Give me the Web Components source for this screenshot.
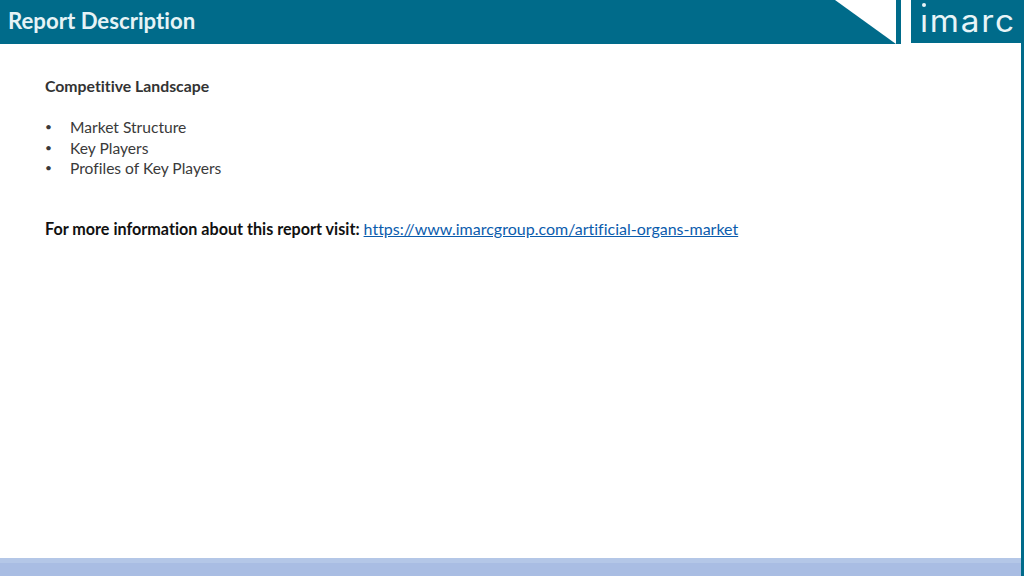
<!DOCTYPE html>
<html lang="en">
<head>
<meta charset="utf-8">
<title>Report Description</title>
<style>
  html, body { margin: 0; padding: 0; background: #fff; }
  body { font-family: 'Lato', sans-serif; }
</style>
</head>
<body>
<report-slide>
  <slide-header slot="header" title="Report Description"></slide-header>
  <report-body>
    <span slot="heading">Competitive Landscape</span>
    <report-item>Market Structure</report-item>
    <report-item>Key Players</report-item>
    <report-item>Profiles of Key Players</report-item>
    <span slot="label">For more information about this report visit:</span>
    <a slot="link" href="#">https://www.imarcgroup.com/artificial-organs-market</a>
  </report-body>
</report-slide>

<script>
class ReportSlide extends HTMLElement {
  connectedCallback() {
    this.attachShadow({ mode: 'open' });
    this.shadowRoot.innerHTML = `
      <style>
        :host {
          display: flex;
          width: 1024px;
          height: 576px;
          overflow: hidden;
          background: #fff;
        }
        .main { flex: 1; display: flex; flex-direction: column; min-width: 0; }
        .content { flex: 1; }
        .edge { width: 3px; background: #006b8a; }
        .footer { height: 18px; display: flex; flex-direction: column; }
        .footer .top { height: 5px; background: #b4c7e7; }
        .footer .bottom { flex: 1; background: #a9bde3; }
      </style>
      <div class="main">
        <slot name="header"></slot>
        <div class="content"><slot></slot></div>
        <div class="footer"><div class="top"></div><div class="bottom"></div></div>
      </div>
      <div class="edge"></div>
    `;
  }
}

class SlideHeader extends HTMLElement {
  connectedCallback() {
    this.attachShadow({ mode: 'open' });
    this.shadowRoot.innerHTML = `
      <style>
        :host { display: flex; height: 44px; background: #fff; }
        .bar {
          flex: 1;
          background: #006b8a;
          color: #e6f3f6;
          font: 700 22.2px/42px 'Lato', sans-serif;
          font-variant-ligatures: none;
          padding-left: 8px;
        }
        .notch { width: 61px; background: #006b8a; clip-path: polygon(0 0, 100% 100%, 0 100%); }
        .stripe { width: 5px; background: #006b8a; }
        .logo {
          position: relative;
          box-sizing: border-box;
          width: 110px;
          height: 43px;
          margin-left: 10px;
          padding-left: 9px;
          background: #006b8a;
          color: #e8f4f7;
          font: 400 30px/43px 'Inter', sans-serif;
          letter-spacing: 1.6px;
          white-space: nowrap;
        }
        .word { display: inline-block; transform: scaleX(1.11); transform-origin: 0 50%; }
        /* the logo's dot sits higher than a normal i dot */
        .cover { position: absolute; left: 9px; top: 7px; width: 9px; height: 7px; background: #006b8a; }
        .dot { position: absolute; left: 11px; top: 3px; width: 4px; height: 4px; border-radius: 50%; background: #e8f4f7; }
      </style>
      <div class="bar">${this.getAttribute('title')}</div>
      <div class="notch"></div>
      <div class="stripe"></div>
      <div class="logo"><span class="word">imarc</span><span class="cover"></span><span class="dot"></span></div>
    `;
  }
}

class ReportItem extends HTMLElement {
  connectedCallback() {
    this.attachShadow({ mode: 'open' });
    this.shadowRoot.innerHTML = `
      <style>
        :host { display: flex; }
        .bullet { width: 25px; font-size: 12px; }
      </style>
      <span class="bullet">•</span>
      <span><slot></slot></span>
    `;
  }
}

class ReportBody extends HTMLElement {
  connectedCallback() {
    this.attachShadow({ mode: 'open' });
    this.shadowRoot.innerHTML = `
      <style>
        :host {
          display: block;
          padding: 32px 0 0 45px;
          font: 400 15.6px/20.4px 'Lato', sans-serif;
          font-variant-ligatures: none;
          color: #3a3a3a;
        }
        .heading { font-weight: 700; font-size: 15.8px; margin-bottom: 21px; color: #333; }
        .list { margin-bottom: 40px; }
        .more { font-weight: 700; color: #111; font-size: 16.15px; display: flex; gap: 4px; }
        ::slotted(a) { color: #0b5cad; font-size: 16px; font-weight: 400; text-decoration: underline; }
      </style>
      <div class="heading"><slot name="heading"></slot></div>
      <div class="list"><slot></slot></div>
      <div class="more"><slot name="label"></slot><slot name="link"></slot></div>
    `;
  }
}

customElements.define('report-slide', ReportSlide);
customElements.define('slide-header', SlideHeader);
customElements.define('report-item', ReportItem);
customElements.define('report-body', ReportBody);
</script>
</body>
</html>
